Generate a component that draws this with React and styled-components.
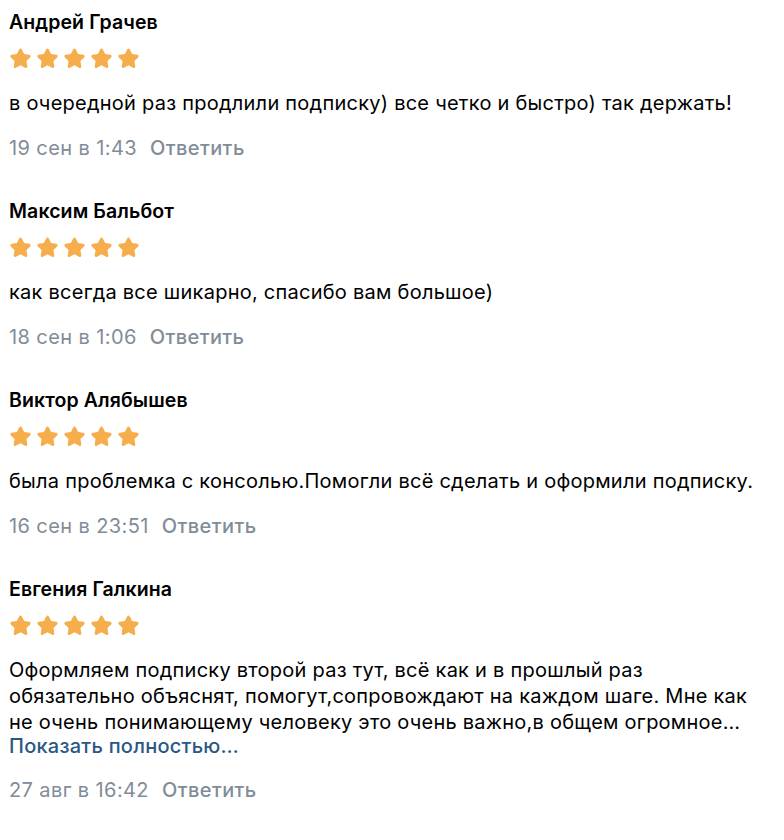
import React from "react";
import styled, { createGlobalStyle } from "styled-components";

const Global = createGlobalStyle`
  html, body { margin: 0; padding: 0; background: #ffffff; }
  body { font-family: Inter, "Noto Sans", Roboto, sans-serif; -webkit-font-smoothing: antialiased; }
`;

const List = styled.div`
  display: flex;
  flex-direction: column;
  gap: 38px;
  padding: 10px 9px;
`;

const Review = styled.article`
  display: flex;
  flex-direction: column;
`;

const Name = styled.div`
  font-size: 19.5px;
  line-height: 24px;
  font-weight: 600;
  letter-spacing: 0.1px;
  color: #000000;
`;

const Stars = styled.div`
  display: flex;
  gap: 4px;
  margin-top: 13px;
  height: 22px;
`;

const Text = styled.div`
  margin-top: 21px;
  font-size: 20px;
  line-height: 26px;
  letter-spacing: 0.25px;
  color: #000000;
  white-space: nowrap;
`;

const More = styled.a`
  display: block;
  font-size: 20px;
  line-height: 23px;
  letter-spacing: 0.25px;
  color: #2a5885;
  font-weight: 500;
  text-decoration: none;
`;

const Meta = styled.div`
  margin-top: 19px;
  display: flex;
  gap: 13px;
  font-size: 20px;
  line-height: 26px;
  letter-spacing: 0.4px;
  color: #818c99;
`;

const Reply = styled.span`
  font-weight: 500;
  color: #818c99;
`;

const Star = () => (
  <svg width="23" height="22" viewBox="0 0 24 23">
    <path
      d="M12 1.6c.6 0 1.1.3 1.4.9l2.4 4.9 5.4.8c1.3.2 1.8 1.8.9 2.7l-3.9 3.8.9 5.4c.2 1.3-1.1 2.3-2.3 1.7L12 19.2l-4.8 2.6c-1.2.6-2.5-.4-2.3-1.7l.9-5.4-3.9-3.8c-.9-.9-.4-2.5.9-2.7l5.4-.8 2.4-4.9c.3-.6.8-.9 1.4-.9z"
      fill="#f6ad4b"
    />
  </svg>
);

const reviews = [
  {
    name: "Андрей Грачев",
    lines: ["в очередной раз продлили подписку) все четко и быстро) так держать!"],
    date: "19 сен в 1:43",
  },
  {
    name: "Максим Бальбот",
    lines: ["как всегда все шикарно, спасибо вам большое)"],
    date: "18 сен в 1:06",
  },
  {
    name: "Виктор Алябышев",
    lines: ["была проблемка с консолью.Помогли всё сделать и оформили подписку."],
    date: "16 сен в 23:51",
  },
  {
    name: "Евгения Галкина",
    lines: [
      "Оформляем подписку второй раз тут, всё как и в прошлый раз",
      "обязательно объяснят, помогут,сопровождают на каждом шаге. Мне как",
      "не очень понимающему человеку это очень важно,в общем огромное…",
    ],
    more: true,
    date: "27 авг в 16:42",
  },
];

export default function App() {
  return (
    <>
      <Global />
      <List>
        {reviews.map((r) => (
          <Review key={r.name}>
            <Name>{r.name}</Name>
            <Stars>
              {[0, 1, 2, 3, 4].map((i) => (
                <Star key={i} />
              ))}
            </Stars>
            <Text>
              {r.lines.map((l, i) => (
                <div key={i}>{l}</div>
              ))}
            </Text>
            {r.more && <More href="#">Показать полностью…</More>}
            <Meta>
              <span>{r.date}</span>
              <Reply>Ответить</Reply>
            </Meta>
          </Review>
        ))}
      </List>
    </>
  );
}
